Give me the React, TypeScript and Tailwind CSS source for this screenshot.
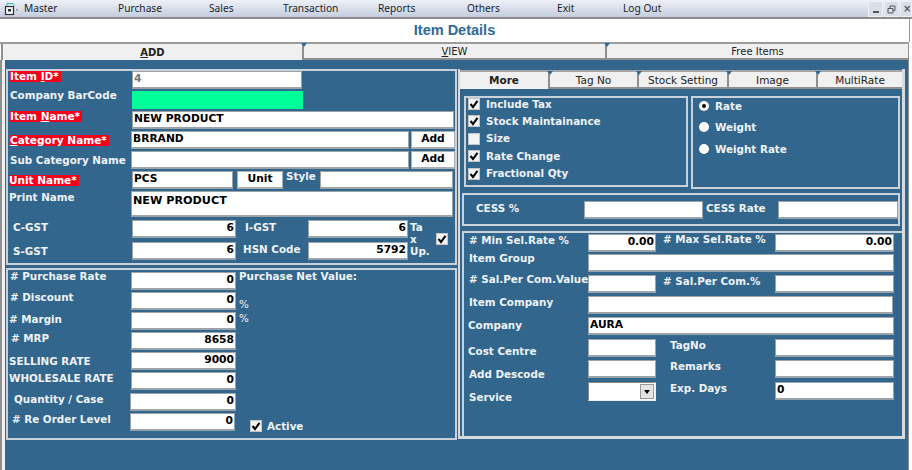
import React from "react";

const font = { fontFamily: '"DejaVu Sans", Verdana, sans-serif' };

function L({ children, className = "" }: { children: React.ReactNode; className?: string }) {
  return <span className={"block w-fit text-[10.35px] leading-[11px] font-bold text-[#eef3f7] whitespace-nowrap " + className}>{children}</span>;
}

function R({ children, className = "" }: { children: React.ReactNode; className?: string }) {
  return <span className={"block w-fit pr-[2px] text-[10.5px] leading-[11px] font-bold text-white bg-[#f5001c] whitespace-nowrap " + className}>{children}</span>;
}

function F({ v = "", className = "", right = false, gray = false }: { v?: string; className?: string; right?: boolean; gray?: boolean }) {
  return (
    <div className={"shrink-0 h-[18px] bg-white border border-[#9aa3aa] border-b-2 px-[1px] text-[10.7px] leading-[13px] font-bold whitespace-nowrap overflow-hidden " + (right ? "text-right " : "") + (gray ? "text-[#777] " : "text-black ") + className}>
      {v}
    </div>
  );
}

function Btn({ children, className = "" }: { children: React.ReactNode; className?: string }) {
  return <div className={"shrink-0 h-[18px] bg-white border border-[#a8b0b6] border-b-2 flex items-center justify-center text-[10.7px] font-bold text-black " + className}>{children}</div>;
}

function Check({ on = true, className = "" }: { on?: boolean; className?: string }) {
  return (
    <span className={"shrink-0 w-[12px] h-[12px] bg-[#f3f3f3] border border-[#c5c5c5] flex items-center justify-center " + className}>
      {on && (
        <svg width="10" height="10" viewBox="0 0 10 10">
          <path d="M1.5 5 L4 8 L8.5 1.8" fill="none" stroke="#000" strokeWidth="2" />
        </svg>
      )}
    </span>
  );
}

function Radio({ on = false }: { on?: boolean }) {
  return (
    <span className="shrink-0 w-[10px] h-[10px] rounded-full bg-white flex items-center justify-center">
      {on && <span className="w-[4px] h-[4px] rounded-full bg-black" />}
    </span>
  );
}

function Mark() {
  return <span className="absolute -top-[1px] -left-[3px] w-0 h-0 border-l-[3px] border-r-[3px] border-t-[4px] border-l-transparent border-r-transparent border-t-[#2f6a94]" />;
}

const menu: [string, string][] = [
  ["Master", "w-[94px]"],
  ["Purchase", "w-[91px]"],
  ["Sales", "w-[74px]"],
  ["Transaction", "w-[95px]"],
  ["Reports", "w-[89px]"],
  ["Others", "w-[90px]"],
  ["Exit", "w-[66px]"],
  ["Log Out", "w-[60px]"],
];

export default function App() {
  return (
    <div className="w-[912px] h-[470px] overflow-hidden flex flex-col bg-white" style={font}>
      {/* menu bar */}
      <div className="h-[19px] shrink-0 flex items-center bg-gradient-to-b from-[#eef1f8] to-[#c5cddd] border-b-2 border-[#8c8c8c]">
        <svg className="ml-[4px] shrink-0" width="14" height="14" viewBox="0 0 14 14">
          <path d="M3 3.5 V1.5 H9 L10.5 3.5" fill="#d8f4f4" stroke="#35b8b8" strokeWidth="1" />
          <rect x="1.5" y="4.5" width="8" height="8" fill="#f4f4f4" stroke="#2a2f38" strokeWidth="1.2" />
          <rect x="4" y="7" width="3" height="2.5" fill="#2a2f38" />
          <rect x="12" y="7" width="1.5" height="1.5" fill="#7a8596" />
        </svg>
        <div className="ml-[6px] flex text-[10.2px] text-[#20242c]" style={{ fontFamily: '"Noto Sans", sans-serif' }}>
          {menu.map(([m, w]) => (
            <span key={m} className={w}>{m}</span>
          ))}
        </div>
        <div className="ml-auto flex gap-[1px] h-[16px] self-start mt-[1px]">
          <span className="w-[15px] h-full bg-[#d8dfe8] border border-[#eef2f6] flex items-end justify-center pb-[3px]"><span className="w-[6px] h-[2px] bg-[#555]" /></span>
          <span className="w-[15px] h-full bg-[#d8dfe8] border border-[#eef2f6] flex items-center justify-center">
            <svg width="9" height="9" viewBox="0 0 9 9"><path d="M1 3.5h5v4.5h-5z M3 3V1h5v4.5h-2" fill="none" stroke="#555" /></svg>
          </span>
          <span className="w-[12px] h-full bg-[#d8dfe8] border border-[#eef2f6] text-[10px] leading-[13px] font-bold text-[#555] pl-[2px]">×</span>
        </div>
      </div>

      {/* title */}
      <div className="h-[23px] shrink-0 flex items-center justify-center w-[910px] border-r border-[#9a9a9a] text-[14.5px] font-bold text-[#2f6a99]" style={{ fontFamily: '"Liberation Sans", sans-serif' }}>
        Item Details
      </div>

      {/* main tab strip */}
      <div className="h-[18px] shrink-0 w-[909px] flex border-t-2 border-[#9c9c9c] text-[10px] text-[#222] leading-[16px]">
        <div className="w-[301px] ml-[1px] bg-[#f0f0f0] text-center font-bold border-l-2 border-[#8f8f8f] leading-[18px]"><u>A</u>DD</div>
        <div className="relative w-[303px] bg-[#f0f0f0] text-center border-l-2 border-b-2 border-[#8f8f8f]"><Mark /><u>V</u>IEW</div>
        <div className="relative flex-1 bg-[#f0f0f0] text-center border-l-2 border-b-2 border-r border-[#8f8f8f]"><Mark />Free Items</div>
      </div>

      {/* body */}
      <div className="flex-1 min-h-0 w-[909px] flex bg-[#33668c] border-l-[2px] border-r border-[#8f8f8f]">
        <div className="w-[3px] bg-[#f0f0f0] shrink-0" />
        <div className="flex-1 min-w-0 flex pl-[1px] pt-[9px] pb-[30px]">
          {/* left column */}
          <div className="w-[451px] shrink-0 flex flex-col gap-[3px]">
            <div className="h-[196px] shrink-0 border-2 border-[#c9d2da] flex flex-col gap-[2px]">
              <div className="flex h-[18px]"><div className="w-[124px] pl-[2px]"><R><span>Item <u>I</u>D*</span></R></div><F v="4" gray className="w-[170px]" /></div>
              <div className="flex h-[18px]"><div className="w-[124px] pl-[2px] -mt-[1px]"><L>Company BarCode</L></div><div className="w-[171px] h-[18px] bg-[#00ff99]" /></div>
              <div className="flex h-[18px]"><div className="w-[124px] pl-[2px]"><R><span>Item <u>N</u>ame*</span></R></div><F v="NEW PRODUCT" className="w-[322px]" /></div>
              <div className="flex h-[18px]"><div className="w-[124px] pl-[2px] pt-[4px]"><R><span><u>C</u>ategory Name*</span></R></div><F v="BRRAND" className="w-[278px]" /><Btn className="ml-[2px] w-[44px]">Add</Btn></div>
              <div className="flex h-[18px]"><div className="w-[124px] pl-[2px] pt-[4px]"><L>Sub Category Name</L></div><F className="w-[278px]" /><Btn className="ml-[2px] w-[44px]">Add</Btn></div>
              <div className="flex h-[18px]">
                <div className="w-[124px] pl-[1px] pt-[4px]"><R>Unit Name*</R></div>
                <F v="PCS" className="w-[101px]" />
                <Btn className="ml-[4px] w-[46px]">Unit</Btn>
                <L className="ml-[3px]">Style</L>
                <F className="ml-[4px] w-[133px]" />
              </div>
              <div className="flex h-[26px]">
                <div className="w-[123px] pl-[1px] pt-[1px]"><L>Print Name</L></div>
                <div className="w-[322px] h-[26px] bg-white border border-[#9aa3aa] border-b-2 px-[1px] text-[11.2px] leading-[17px] font-bold text-black">NEW PRODUCT</div>
              </div>
              <div className="flex mt-[1px]">
                <div className="w-[124px] flex flex-col">
                  <L className="pl-[5px] pt-[2px]">C-GST</L>
                  <L className="pl-[5px] mt-[13px]">S-GST</L>
                </div>
                <div className="w-[104px] flex flex-col gap-[4px]">
                  <F v="6" right className="w-[104px]" />
                  <F v="6" right className="w-[104px]" />
                </div>
                <div className="w-[72px] flex flex-col">
                  <L className="pl-[9px] pt-[2px]">I-GST</L>
                  <L className="pl-[7px] mt-[11px]">HSN Code</L>
                </div>
                <div className="w-[100px] flex flex-col gap-[4px]">
                  <F v="6" right className="w-[100px]" />
                  <F v="5792" right className="w-[100px]" />
                </div>
                <div className="w-[26px] ml-[2px] pt-[1px] text-[10.35px] leading-[12px] font-bold text-[#eef3f7]">Ta<br />x<br />Up.</div>
                <Check className="mt-[13px]" />
              </div>
            </div>

            <div className="h-[172px] shrink-0 border-2 border-[#c9d2da] pt-[2px] flex">
              <div className="w-[229px] flex flex-col">
                <div className="flex h-[18px]"><div className="w-[123px] pl-[2px] -mt-[1px]"><L># Purchase Rate</L></div><F v="0" right className="w-[105px]" /></div>
                <div className="flex h-[18px] mt-[2px]"><div className="w-[123px] pl-[2px]"><L># Discount</L></div><F v="0" right className="w-[105px]" /></div>
                <div className="flex h-[18px] mt-[2px]"><div className="w-[123px] pl-[1px] pt-[2px]"><L># Margin</L></div><F v="0" right className="w-[105px]" /></div>
                <div className="flex h-[18px] mt-[2px]"><div className="w-[123px] pl-[3px] pt-[1px]"><L># MRP</L></div><F v="8658" right className="w-[105px]" /></div>
                <div className="flex h-[18px] mt-[2px]"><div className="w-[123px] pl-[1px] pt-[4px]"><L>SELLING RATE</L></div><F v="9000" right className="w-[105px]" /></div>
                <div className="flex h-[18px] mt-[2px]"><div className="w-[123px] pl-[1px] pt-[1px]"><L>WHOLESALE RATE</L></div><F v="0" right className="w-[105px]" /></div>
                <div className="flex h-[18px] mt-[3px]"><div className="w-[122px] pl-[6px] pt-[1px]"><L>Quantity / Case</L></div><F v="0" right className="w-[106px]" /></div>
                <div className="flex h-[18px] mt-[2px]"><div className="w-[122px] pl-[4px] pt-[1px]"><L># Re Order Level</L></div><F v="0" right className="w-[105px]" /></div>
              </div>
              <div className="flex-1 flex flex-col pl-[2px]">
                <L className="-mt-[1px]">Purchase Net Value:</L>
                <L className="mt-[17px] font-normal">%</L>
                <L className="mt-[3px] font-normal">%</L>
                <div className="mt-[96px] ml-[11px] flex items-center gap-[5px]"><Check /><L>Active</L></div>
              </div>
            </div>
          </div>

          {/* right column */}
          <div className="w-[447px] ml-[1px] shrink-0 border-l-2 border-r-[3px] border-b-[3px] border-[#d6dbe0] border-t-0 flex flex-col h-[370px]">
            <div className="h-[19px] mt-[1px] shrink-0 flex bg-[#f0f0f0] border-t-2 border-[#a5a5a5] text-[10.5px] text-[#222] leading-[17px] text-center">
              <div className="w-[88px] font-bold">More</div>
              <div className="relative w-[89px] border-l-2 border-b-2 border-[#8f8f8f]"><Mark />Tag No</div>
              <div className="relative w-[90px] border-l-2 border-b-2 border-[#8f8f8f] whitespace-nowrap"><Mark />Stock Setting</div>
              <div className="relative w-[89px] border-l-2 border-b-2 border-[#8f8f8f]"><Mark />Image</div>
              <div className="relative flex-1 border-l-2 border-b-2 border-[#8f8f8f]"><Mark />MultiRate</div>
            </div>
            <div className="flex-1 min-h-0 flex flex-col pl-[1px]">
              <div className="flex mt-[7px] pl-[3px] gap-[3px]">
                <div className="w-[224px] h-[91px] border-2 border-[#c9d2da] flex flex-col gap-[5.4px] pl-[2px]">
                  {[
                    ["Include Tax", true],
                    ["Stock Maintainance", true],
                    ["Size", false],
                    ["Rate Change", true],
                    ["Fractional Qty", true],
                  ].map(([t, on]) => (
                    <div key={t as string} className="h-[12px] flex items-center gap-[6px]">
                      <Check on={on as boolean} />
                      <L>{t as string}</L>
                    </div>
                  ))}
                </div>
                <div className="w-[209px] h-[93px] border-2 border-[#c9d2da] flex flex-col pl-[6px] pt-[2px]">
                  <div className="h-[12px] flex items-center gap-[6px]"><Radio on /><L>Rate</L></div>
                  <div className="h-[12px] mt-[9px] flex items-center gap-[6px]"><Radio /><L>Weight</L></div>
                  <div className="h-[12px] mt-[10px] flex items-center gap-[6px]"><Radio /><L>Weight Rate</L></div>
                </div>
              </div>

              <div className="w-[438px] h-[33px] mt-[4px] ml-[1px] border-2 border-[#c9d2da] flex items-center">
                <div className="w-[120px] pl-[12px] -mt-[3px]"><L>CESS %</L></div>
                <F className="w-[119px]" />
                <div className="ml-[3px] w-[72px] -mt-[3px]"><L>CESS Rate</L></div>
                <F className="w-[120px]" />
              </div>

              <div className="mt-[5px] ml-[1px] h-[205px] border-t-2 border-[#c9d2da] border-l-2 flex flex-col pt-[1px]">
                <div className="flex h-[18px]"><div className="w-[124px] pl-[5px] pt-[1px]"><L># Min Sel.Rate %</L></div><F v="0.00" right className="w-[68px]" /><div className="w-[119px] pl-[7px]"><L># Max Sel.Rate %</L></div><F v="0.00" right className="w-[119px]" /></div>
                <div className="flex h-[18px] mt-[2px]"><div className="w-[124px] pl-[5px] -mt-[1px]"><L>Item Group</L></div><F className="w-[306px]" /></div>
                <div className="flex h-[18px] mt-[3px]"><div className="w-[124px] pl-[5px] -mt-[1px]"><L># Sal.Per Com.Value</L></div><F className="w-[68px]" /><div className="w-[119px] pl-[7px] pt-[1px]"><L># Sal.Per Com.%</L></div><F className="w-[119px]" /></div>
                <div className="flex h-[18px] mt-[3px]"><div className="w-[124px] pl-[5px] pt-[1px]"><L>Item Company</L></div><F className="w-[305px]" /></div>
                <div className="flex h-[18px] mt-[3px]"><div className="w-[124px] pl-[4px] pt-[3px]"><L>Company</L></div><F v="AURA" className="w-[306px]" /></div>
                <div className="flex h-[18px] mt-[4px]"><div className="w-[124px] pl-[4px] pt-[7px]"><L>Cost Centre</L></div><F className="w-[68px]" /><div className="w-[119px] pl-[14px] pt-[1px]"><L>TagNo</L></div><F className="w-[119px]" /></div>
                <div className="flex h-[18px] mt-[3px]"><div className="w-[124px] pl-[5px] pt-[9px]"><L>Add Descode</L></div><F className="w-[68px]" /><div className="w-[119px] pl-[14px] pt-[1px]"><L>Remarks</L></div><F className="w-[119px]" /></div>
                <div className="flex h-[18px] mt-[4px]">
                  <div className="w-[124px] pl-[5px] pt-[10px]"><L>Service</L></div>
                  <div className="w-[68px] h-[19px] bg-white border border-[#888] border-r-[#eee] border-b-[#eee] flex justify-end p-[1px]">
                    <div className="w-[14px] bg-[#e4e4e4] border border-[#999] flex items-center justify-center"><span className="w-0 h-0 border-l-[3px] border-r-[3px] border-t-[4px] border-l-transparent border-r-transparent border-t-black" /></div>
                  </div>
                  <div className="w-[119px] pl-[14px] pt-[1px]"><L>Exp. Days</L></div>
                  <F v="0" className="w-[119px]" />
                </div>
              </div>
            </div>
          </div>
        </div>
      </div>
    </div>
  );
}
